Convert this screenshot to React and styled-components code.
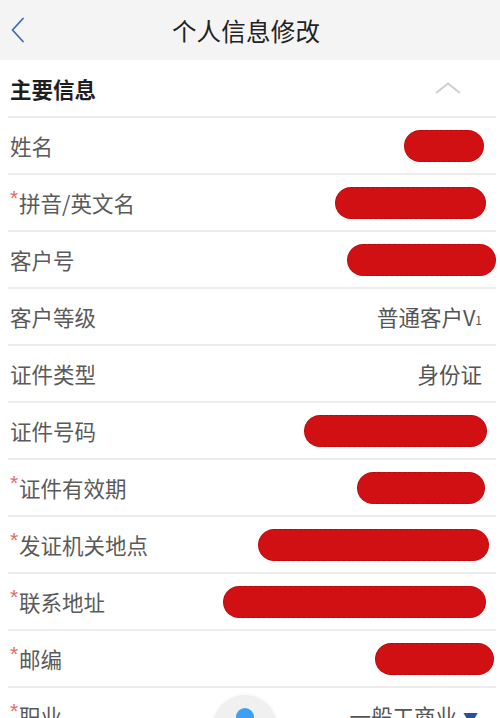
import React from "react";
import styled, { createGlobalStyle } from "styled-components";

const Global = createGlobalStyle`
  html, body { margin: 0; padding: 0; background: #fff; overflow: hidden; }
  body { font-family: "Noto Sans CJK SC", "Noto Sans", sans-serif; }
  * { box-sizing: border-box; }
`;

const Page = styled.div`
  position: relative;
  width: 500px;
  height: 718px;
  overflow: hidden;
  background: #fff;
`;

const Header = styled.header`
  height: 60px;
  background: #f4f4f4;
  display: grid;
  grid-template-columns: 60px 1fr 60px;
  align-items: center;
`;

const Back = styled.div`
  display: flex;
  align-items: center;
  padding-left: 10px;
`;

const Title = styled.h1`
  margin: 0;
  text-align: center;
  font-size: 24.5px;
  font-weight: 400;
  color: #222;
  letter-spacing: 0.2px;
  padding-right: 8px;
`;

const List = styled.div`
  padding: 0 4px 0 8px;
`;

const Row = styled.div`
  height: ${(p) => p.$h || 57}px;
  display: flex;
  align-items: center;
  justify-content: space-between;
  border-bottom: 2px solid #ececec;
  padding-left: 2px;
`;

const SectionTitle = styled.div`
  font-size: 21.5px;
  font-weight: 700;
  color: #1e1e1e;
`;

const Chevron = styled.div`
  margin-right: 34px;
  display: flex;
  align-items: center;
`;

const Label = styled.div`
  font-size: 21.5px;
  color: #5a5a5a;
  display: flex;
  align-items: flex-start;
`;

const Star = styled.span`
  color: #e06a6a;
  font-size: 21px;
  line-height: 1;
  margin-top: 0px;
  width: 9px;
  font-family: "Liberation Sans", sans-serif;
`;

const Value = styled.div`
  font-size: 21.5px;
  color: #555;
  margin-right: ${(p) => p.$mr || 14}px;
  display: flex;
  align-items: center;
`;

const Sub = styled.span`
  font-size: 12px;
  margin-top: 6px;
`;

const Blob = styled.div`
  height: 32px;
  width: ${(p) => p.$w}px;
  margin-right: ${(p) => p.$mr}px;
  border-radius: 16px;
  background: #d01012;
  border: 1px dashed #b80a0c;
`;

const Caret = styled.span`
  color: #2c4f9c;
  font-size: 15px;
  margin-left: 6px;
  margin-top: 4px;
`;

const Floater = styled.div`
  position: absolute;
  left: 213px;
  top: 695px;
  width: 64px;
  height: 64px;
  border-radius: 50%;
  background: #f0f0f0;
  box-shadow: 0 0 4px rgba(0, 0, 0, 0.06);
  display: flex;
  justify-content: center;
  padding-top: 13px;
`;

const Dot = styled.div`
  width: 18px;
  height: 18px;
  border-radius: 50%;
  background: #3d9ff5;
`;

const rows = [
  { label: "姓名", blob: [80, 12] },
  { label: "拼音/英文名", req: true, blob: [151, 10] },
  { label: "客户号", blob: [149, 0] },
  { label: "客户等级", value: "level" },
  { label: "证件类型", value: "身份证" },
  { label: "证件号码", blob: [183, 9] },
  { label: "证件有效期", req: true, blob: [128, 11] },
  { label: "发证机关地点", req: true, blob: [231, 7] },
  { label: "联系地址", req: true, blob: [263, 10] },
  { label: "邮编", req: true, blob: [119, 2] },
];

export default function App() {
  return (
    <Page>
      <Global />
      <Header>
        <Back>
          <svg width="16" height="26" viewBox="0 0 16 26">
            <path d="M13 1.5 L2.5 13 L13 24.5" fill="none" stroke="#3f6db3" strokeWidth="1.8" strokeLinecap="round" strokeLinejoin="round" />
          </svg>
        </Back>
        <Title>个人信息修改</Title>
        <div />
      </Header>
      <List>
        <Row $h={58}>
          <SectionTitle>主要信息</SectionTitle>
          <Chevron>
            <svg width="28" height="12" viewBox="0 0 28 12">
              <path d="M2 11 L14 1.5 L26 11" fill="none" stroke="#cfcfcf" strokeWidth="2" />
            </svg>
          </Chevron>
        </Row>
        {rows.map((r) => (
          <Row key={r.label}>
            <Label>
              {r.req && <Star>*</Star>}
              {r.label}
            </Label>
            {r.blob ? (
              <Blob $w={r.blob[0]} $mr={r.blob[1]} />
            ) : r.value === "level" ? (
              <Value>
                普通客户V<Sub>1</Sub>
              </Value>
            ) : (
              <Value>{r.value}</Value>
            )}
          </Row>
        ))}
        <Row>
          <Label>
            <Star>*</Star>职业
          </Label>
          <Value $mr={18}>
            一般工商业<Caret>▼</Caret>
          </Value>
        </Row>
      </List>
      <Floater>
        <Dot />
      </Floater>
    </Page>
  );
}
